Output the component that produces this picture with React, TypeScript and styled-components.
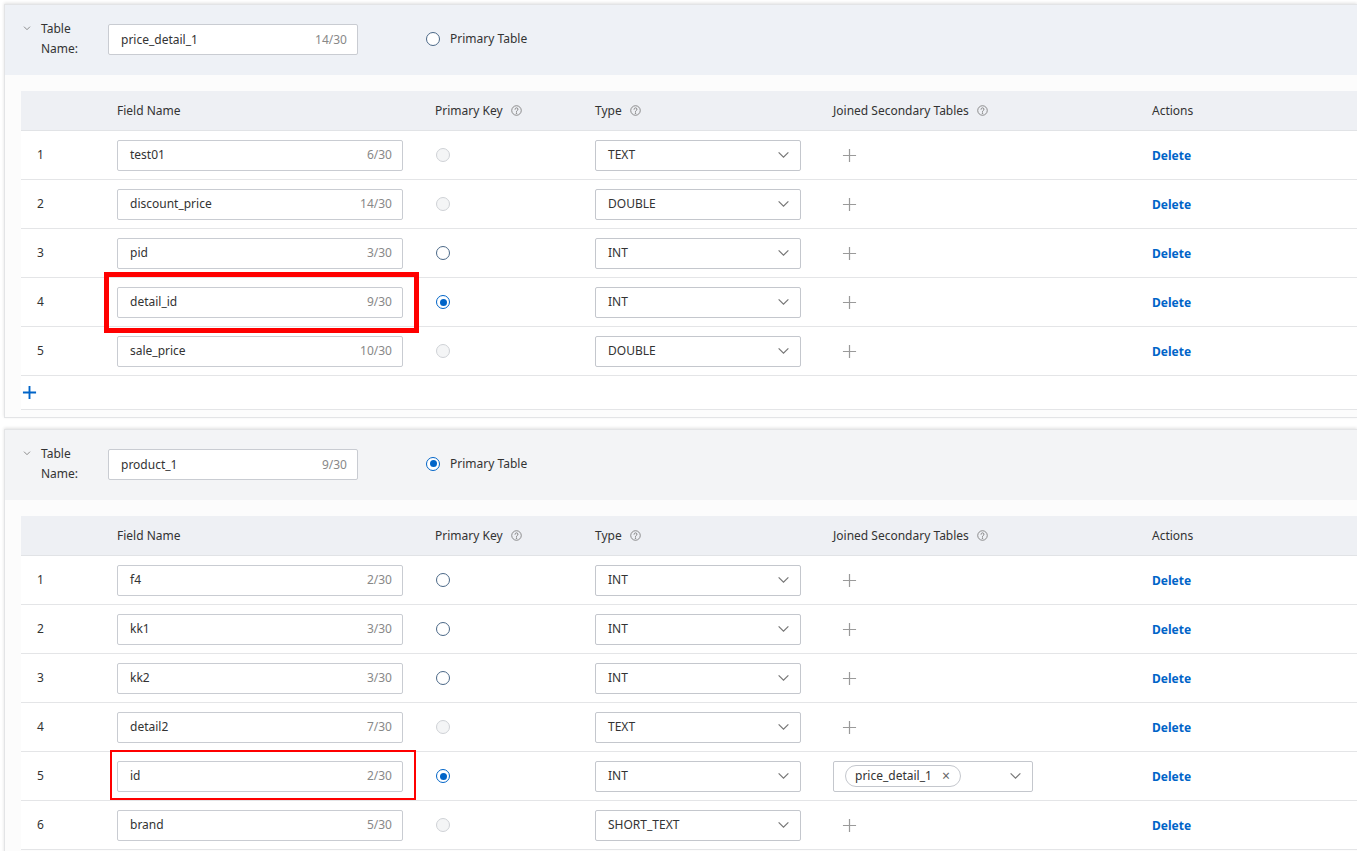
import React from 'react';
import styled, { createGlobalStyle } from 'styled-components';

const Global = createGlobalStyle`
  body {
    margin: 0;
    background: #fff;
    font-family: "Noto Sans", "Open Sans", sans-serif;
    font-size: 12px;
    color: #333;
  }
`;

const Page = styled.div`
  padding: 4px 0 0 4px;
  display: flex;
  flex-direction: column;
  gap: 11px;
  overflow: hidden;
`;

const Card = styled.section`
  border: 1px solid #e3e4e6;
  border-right: none;
  background: #fcfcfc;
  box-shadow: 0 -1px 3px rgba(0, 0, 0, 0.12);
  padding-bottom: 7px;
`;

const CardHead = styled.div<{ $tone: string }>`
  height: 70px;
  background: ${p => p.$tone};
  display: flex;
  align-items: flex-start;
  padding: 16px 0 0 18px;
  box-sizing: border-box;
`;

const Chevron = styled.span`
  width: 10px;
  margin-top: 3px;
  color: #777;
  display: flex;
`;

const HeadLabel = styled.div`
  width: 44px;
  margin-left: 8px;
  line-height: 20px;
  margin-top: -2px;
  color: #333;
`;

const HeadInputWrap = styled.div`
  margin-left: 23px;
  margin-top: 3px;
`;

const PrimaryTable = styled.label`
  display: flex;
  align-items: center;
  gap: 10px;
  margin-left: 67px;
  margin-top: 9px;
`;

const Table = styled.div`
  margin: 16px 0 0 16px;
`;

const cols = '96px 318px 160px 238px 319px 1fr';

const HeadRow = styled.div`
  display: grid;
  grid-template-columns: ${cols};
  height: 40px;
  align-items: center;
  background: #eef0f4;
  border-bottom: 1px solid #e1e3e6;
  color: #333;
  box-sizing: border-box;
`;

const Row = styled.div`
  display: grid;
  grid-template-columns: ${cols};
  height: 48px;
  align-items: center;
  border-bottom: 1px solid #e4e5e7;
  background: #fff;
`;

const Cell = styled.div`
  display: flex;
  align-items: center;
  gap: 8px;
  position: relative;
`;

const IndexCell = styled(Cell)`
  padding-left: 16px;
  margin-top: -2px;
`;

const HeadCellFirst = styled.div``;

const AddRow = styled.div`
  height: 33px;
  display: flex;
  align-items: center;
  padding-left: 1px;
  border-bottom: 1px solid #e4e5e7;
  background: #fff;
`;

const InputBox = styled.div<{ $w: number }>`
  width: ${p => p.$w}px;
  height: 31px;
  box-sizing: border-box;
  border: 1px solid #c9ccd2;
  border-radius: 2px;
  background: #fff;
  display: flex;
  align-items: center;
  justify-content: space-between;
  padding: 0 10px 1px 12px;
`;

const Count = styled.span`
  color: #888;
`;

type Mark = { thick: number; x: number; y: number; w: number; h: number };

const Highlight = styled.div<{ $m: Mark }>`
  position: absolute;
  pointer-events: none;
  left: ${p => p.$m.x}px;
  top: ${p => p.$m.y}px;
  width: ${p => p.$m.w}px;
  height: ${p => p.$m.h}px;
  box-sizing: border-box;
  border: ${p => p.$m.thick}px solid #f00;
`;

const Select = styled.div<{ $w: number }>`
  width: ${p => p.$w}px;
  height: 31px;
  box-sizing: border-box;
  border: 1px solid #c4c7cd;
  border-radius: 2px;
  background: #fff;
  display: flex;
  align-items: center;
  justify-content: space-between;
  padding: 0 10px 1px 12px;
`;

const Tag = styled.span`
  border: 1px solid #c4c7cd;
  border-radius: 11px;
  height: 20px;
  display: inline-flex;
  align-items: center;
  gap: 10px;
  padding: 0 10px 0 9px;
  margin-left: -1px;
  color: #333;
`;

const TagClose = styled.span`
  color: #666;
  font-size: 14px;
  line-height: 1;
`;

const DeleteLink = styled.a`
  color: #0064c8;
  font-weight: 700;
  cursor: pointer;
`;

const PlusSlot = styled.span`
  margin-left: 9px;
  display: flex;
`;

const RadioDot = styled.span<{ $state: 'on' | 'off' | 'disabled' }>`
  width: 14px;
  height: 14px;
  border-radius: 50%;
  box-sizing: border-box;
  border: 1.5px solid
    ${p => (p.$state === 'on' ? '#0064c8' : p.$state === 'off' ? '#4b6887' : '#cfd2d6')};
  background: ${p => (p.$state === 'disabled' ? '#f4f5f6' : '#fff')};
  display: inline-flex;
  align-items: center;
  justify-content: center;
  margin-left: 1px;
  &::after {
    content: '';
    display: ${p => (p.$state === 'on' ? 'block' : 'none')};
    width: 7px;
    height: 7px;
    border-radius: 50%;
    background: #0064c8;
  }
`;

const Help = () => (
  <svg width="11" height="11" viewBox="0 0 12 12" fill="none" stroke="#777" strokeWidth="0.9">
    <circle cx="6" cy="6" r="5.2" />
    <path d="M4.4 4.7a1.6 1.6 0 1 1 2.2 1.5c-.4.2-.6.5-.6.9v.4" strokeLinecap="round" />
    <circle cx="6" cy="8.9" r="0.35" fill="#777" />
  </svg>
);

const ChevronDown = ({ size = 12, color = '#666' }: { size?: number; color?: string }) => (
  <svg width={size} height={size} viewBox="0 0 12 12" fill="none" stroke={color} strokeWidth="1.1">
    <path d="M1.5 4l4.5 4.5L10.5 4" />
  </svg>
);

const Plus = ({ color = '#9a9a9a', w = 1.3, size = 15 }: { color?: string; w?: number; size?: number }) => (
  <svg width={size} height={size} viewBox="0 0 16 16" fill="none" stroke={color} strokeWidth={w}>
    <path d="M8 1v14M1 8h14" />
  </svg>
);

type Field = {
  name: string;
  pk: 'on' | 'off' | 'disabled';
  type: string;
  joined?: string;
  mark?: Mark;
};

type TableDef = {
  name: string;
  primary: boolean;
  tone: string;
  fields: Field[];
  addRow: boolean;
};

const tables: TableDef[] = [
  {
    name: 'price_detail_1',
    primary: false,
    tone: '#eef1f6',
    addRow: true,
    fields: [
      { name: 'test01', pk: 'disabled', type: 'TEXT' },
      { name: 'discount_price', pk: 'disabled', type: 'DOUBLE' },
      { name: 'pid', pk: 'off', type: 'INT' },
      { name: 'detail_id', pk: 'on', type: 'INT', mark: { thick: 5, x: -13, y: -15, w: 315, h: 61 } },
      { name: 'sale_price', pk: 'disabled', type: 'DOUBLE' },
    ],
  },
  {
    name: 'product_1',
    primary: true,
    tone: '#f3f4f6',
    addRow: false,
    fields: [
      { name: 'f4', pk: 'off', type: 'INT' },
      { name: 'kk1', pk: 'off', type: 'INT' },
      { name: 'kk2', pk: 'off', type: 'INT' },
      { name: 'detail2', pk: 'disabled', type: 'TEXT' },
      {
        name: 'id',
        pk: 'on',
        type: 'INT',
        joined: 'price_detail_1',
        mark: { thick: 2, x: -7, y: -11, w: 306, h: 50 },
      },
      { name: 'brand', pk: 'disabled', type: 'SHORT_TEXT' },
    ],
  },
];

function TableCard({ t }: { t: TableDef }) {
  return (
    <Card>
      <CardHead $tone={t.tone}>
        <Chevron>
          <ChevronDown size={8} color="#666" />
        </Chevron>
        <HeadLabel>
          Table
          <br />
          Name:
        </HeadLabel>
        <HeadInputWrap>
          <InputBox $w={250}>
            <span>{t.name}</span>
            <Count>{t.name.length}/30</Count>
          </InputBox>
        </HeadInputWrap>
        <PrimaryTable>
          <RadioDot $state={t.primary ? 'on' : 'off'} />
          Primary Table
        </PrimaryTable>
      </CardHead>
      <Table>
        <HeadRow>
          <HeadCellFirst />
          <Cell>Field Name</Cell>
          <Cell>
            Primary Key <Help />
          </Cell>
          <Cell>
            Type <Help />
          </Cell>
          <Cell>
            Joined Secondary Tables <Help />
          </Cell>
          <Cell>Actions</Cell>
        </HeadRow>
        {t.fields.map((f, i) => (
          <Row key={f.name}>
            <IndexCell>{i + 1}</IndexCell>
            <Cell>
              <InputBox $w={286}>
                <span>{f.name}</span>
                <Count>{f.name.length}/30</Count>
              </InputBox>
              {f.mark && <Highlight $m={f.mark} />}
            </Cell>
            <Cell>
              <RadioDot $state={f.pk} />
            </Cell>
            <Cell>
              <Select $w={206}>
                <span>{f.type}</span>
                <ChevronDown size={13} color="#777" />
              </Select>
            </Cell>
            <Cell>
              {f.joined ? (
                <Select $w={200}>
                  <Tag>
                    {f.joined}
                    <TagClose>×</TagClose>
                  </Tag>
                  <ChevronDown size={13} color="#777" />
                </Select>
              ) : (
                <PlusSlot>
                  <Plus />
                </PlusSlot>
              )}
            </Cell>
            <Cell>
              <DeleteLink>Delete</DeleteLink>
            </Cell>
          </Row>
        ))}
        {t.addRow && (
          <AddRow>
            <Plus color="#0064c8" w={2} size={15} />
          </AddRow>
        )}
      </Table>
    </Card>
  );
}

export default function App() {
  return (
    <>
      <Global />
      <Page>
        {tables.map(t => (
          <TableCard key={t.name} t={t} />
        ))}
      </Page>
    </>
  );
}
